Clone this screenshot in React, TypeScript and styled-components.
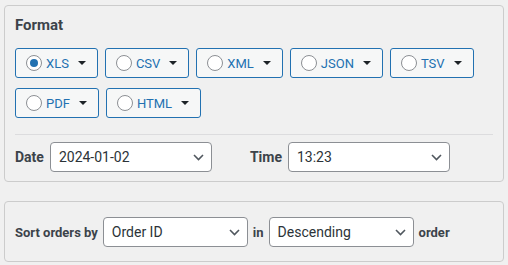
import React from "react";
import styled, { createGlobalStyle } from "styled-components";

const GlobalStyle = createGlobalStyle`
  html, body {
    margin: 0;
    padding: 0;
    background: #f0f0f0;
    font-family: Roboto, "Liberation Sans", Arial, sans-serif;
    color: #2c3338;
  }
`;

const Page = styled.div`
  width: 500px;
  padding: 5px 4px 0;
`;

const Panel = styled.section<{ $compact?: boolean }>`
  border: 1px solid #cccccc;
  border-radius: 4px;
  background: #f0f0f0;
  padding: ${(p) => (p.$compact ? "15px 10px 14px" : "9px 10px 9px")};
  & + & {
    margin-top: 19px;
  }
`;

const Heading = styled.h3`
  margin: 0 0 13px;
  font-size: 15px;
  line-height: 20px;
  font-weight: 700;
  color: #3c434a;
`;

const ButtonGroup = styled.div`
  display: flex;
  flex-wrap: wrap;
  column-gap: 7px;
  row-gap: 10px;
`;

const FormatButton = styled.button`
  display: inline-flex;
  align-items: center;
  height: 30px;
  box-sizing: border-box;
  padding: 0 11px 0 10px;
  border: 1px solid #2271b1;
  border-radius: 3px;
  background: #f6f7f7;
  color: #2271b1;
  font-family: Roboto, "Liberation Sans", Arial, sans-serif;
  font-size: 13px;
  cursor: pointer;
`;

const Radio = styled.span<{ $checked?: boolean }>`
  width: 16px;
  height: 16px;
  box-sizing: border-box;
  border: 1px solid #8c8f94;
  border-radius: 50%;
  background: #fff;
  margin-right: 4px;
  display: inline-flex;
  align-items: center;
  justify-content: center;
  &::after {
    content: "";
    width: 8px;
    height: 8px;
    border-radius: 50%;
    background: ${(p) => (p.$checked ? "#2271b1" : "transparent")};
  }
`;

const Caret = styled.span`
  width: 0;
  height: 0;
  margin-left: 9px;
  border-left: 4px solid transparent;
  border-right: 4px solid transparent;
  border-top: 4px solid #1d2327;
`;

const Divider = styled.hr`
  border: 0;
  border-top: 1px solid #dcdcde;
  margin: 16px 0 7px;
`;

const FieldRow = styled.div`
  display: flex;
  align-items: center;
`;

const Field = styled.label<{ $spaced?: boolean }>`
  display: flex;
  align-items: center;
  gap: 6px;
  margin-right: ${(p) => (p.$spaced ? "38px" : "0")};
`;

const Label = styled.span<{ $small?: boolean }>`
  font-size: ${(p) => (p.$small ? "13px" : "14px")};
  font-weight: 700;
  color: #3c434a;
`;

const SelectWrap = styled.span<{ $width: number }>`
  position: relative;
  display: inline-block;
  width: ${(p) => p.$width}px;
  height: 30px;
`;

const Select = styled.select`
  appearance: none;
  -webkit-appearance: none;
  width: 100%;
  height: 30px;
  box-sizing: border-box;
  padding: 0 24px 0 8px;
  border: 1px solid #8c8f94;
  border-radius: 4px;
  background: #fff;
  color: #2c3338;
  font-family: Roboto, "Liberation Sans", Arial, sans-serif;
  font-size: 14px;
`;

const Chevron = styled.svg`
  position: absolute;
  right: 8px;
  top: 12px;
  pointer-events: none;
`;

const Inline = styled.span`
  display: flex;
  align-items: center;
  gap: 5px;
`;

type DropProps = { value: string; options: string[]; width: number };

const Dropdown: React.FC<DropProps> = ({ value, options, width }) => (
  <SelectWrap $width={width}>
    <Select defaultValue={value}>
      {options.map((o) => (
        <option key={o}>{o}</option>
      ))}
    </Select>
    <Chevron width="11" height="7" viewBox="0 0 11 7">
      <polyline points="1,1 5.5,5.5 10,1" fill="none" stroke="#50575e" strokeWidth="1.6" />
    </Chevron>
  </SelectWrap>
);

const formats = ["XLS", "CSV", "XML", "JSON", "TSV", "PDF", "HTML"];

const App: React.FC = () => {
  return (
    <Page>
      <GlobalStyle />
      <Panel>
        <Heading>Format</Heading>
        <ButtonGroup>
          {formats.map((f) => (
            <FormatButton key={f} type="button">
              <Radio $checked={f === "XLS"} />
              {f}
              <Caret />
            </FormatButton>
          ))}
        </ButtonGroup>
        <Divider />
        <FieldRow>
          <Field $spaced>
            <Label>Date</Label>
            <Dropdown value="2024-01-02" options={["2024-01-02"]} width={162} />
          </Field>
          <Field>
            <Label>Time</Label>
            <Dropdown value="13:23" options={["13:23"]} width={162} />
          </Field>
        </FieldRow>
      </Panel>
      <Panel $compact>
        <Inline>
          <Label $small>Sort orders by</Label>
          <Dropdown value="Order ID" options={["Order ID", "Date", "Total"]} width={145} />
          <Label $small>in</Label>
          <Dropdown value="Descending" options={["Descending", "Ascending"]} width={145} />
          <Label $small>order</Label>
        </Inline>
      </Panel>
    </Page>
  );
};

export default App;
